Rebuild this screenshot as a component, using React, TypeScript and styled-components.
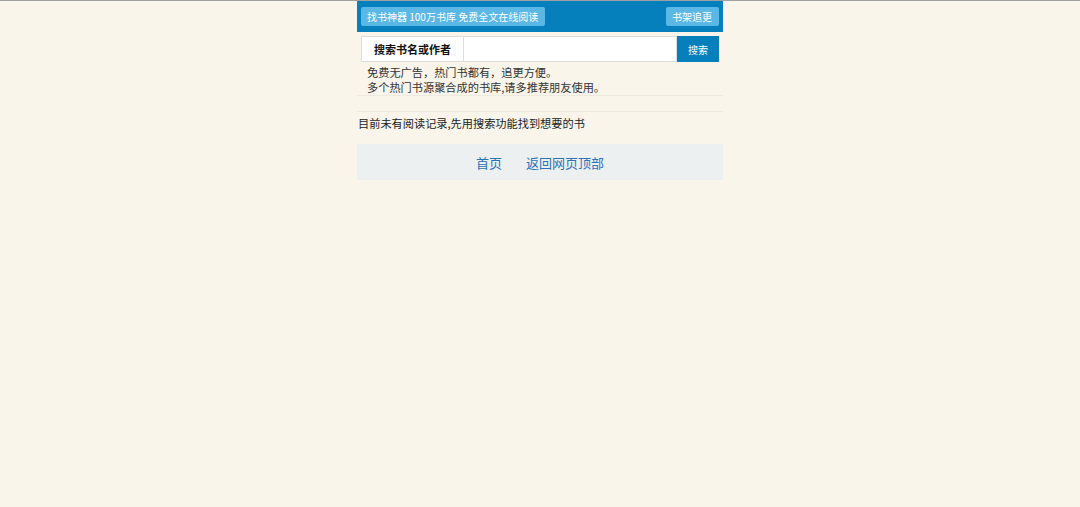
import styled, { createGlobalStyle } from "styled-components";

const GlobalStyle = createGlobalStyle`
  html, body {
    margin: 0;
    padding: 0;
    background: #f9f5eb;
    font-family: "Microsoft YaHei", "Noto Sans CJK SC", sans-serif;
    font-size: 11.2px;
    color: #222;
  }
  body {
    border-top: 1px solid #a0a0a0;
  }
`;

const Page = styled.div`
  width: 366px;
  margin: 0 auto;
`;

const Header = styled.div`
  background: #0580bc;
  height: 31px;
  display: flex;
  align-items: center;
  justify-content: space-between;
  padding: 0 4px;
`;

const TopButton = styled.a`
  background: #5bb7e6;
  color: #fff;
  height: 19px;
  line-height: 19px;
  padding: 0 7px 0 6px;
  border-radius: 2px;
  font-size: 10px;
  text-decoration: none;
`;

const SearchRow = styled.form`
  display: flex;
  margin: 4px 4px 0;
  height: 26px;
`;

const SearchLabel = styled.div`
  width: 103px;
  background: #fff;
  border: 1px solid #ddd;
  box-sizing: border-box;
  display: flex;
  align-items: center;
  justify-content: center;
  font-weight: bold;
  font-size: 11px;
  color: #111;
`;

const SearchInput = styled.input`
  flex: 1;
  border: 1px solid #ddd;
  border-left: none;
  box-sizing: border-box;
  background: #fff;
  outline: none;
  padding: 0 4px;
`;

const SearchButton = styled.button`
  width: 42px;
  border: none;
  background: #0580bc;
  color: #fff;
  font-family: inherit;
  font-size: 10px;
  padding: 0;
`;

const Intro = styled.div`
  padding: 3px 10px 0;
  line-height: 15px;
  color: #333;
  border-bottom: 1px solid #efeae0;
`;

const Spacer = styled.div`
  height: 15px;
  border-bottom: 1px solid #efeae0;
`;

const History = styled.p`
  margin: 0;
  padding: 3px 0 0 1px;
  line-height: 16px;
  color: #222;
`;

const Footer = styled.div`
  margin-top: 13px;
  height: 36px;
  background: #ecf0f1;
  display: flex;
  align-items: center;
  justify-content: center;
  gap: 24px;
`;

const FooterLink = styled.a`
  color: #2a72b8;
  font-size: 13px;
  text-decoration: none;
`;

export default function App() {
  return (
    <>
      <GlobalStyle />
      <Page>
        <Header>
          <TopButton href="#">找书神器 100万书库 免费全文在线阅读</TopButton>
          <TopButton href="#">书架追更</TopButton>
        </Header>
        <SearchRow onSubmit={(e) => e.preventDefault()}>
          <SearchLabel>搜索书名或作者</SearchLabel>
          <SearchInput type="text" />
          <SearchButton type="submit">搜索</SearchButton>
        </SearchRow>
        <Intro>
          免费无广告，热门书都有，追更方便。
          <br />
          多个热门书源聚合成的书库,请多推荐朋友使用。
        </Intro>
        <Spacer />
        <History>目前未有阅读记录,先用搜索功能找到想要的书</History>
        <Footer>
          <FooterLink href="#">首页</FooterLink>
          <FooterLink href="#">返回网页顶部</FooterLink>
        </Footer>
      </Page>
    </>
  );
}
